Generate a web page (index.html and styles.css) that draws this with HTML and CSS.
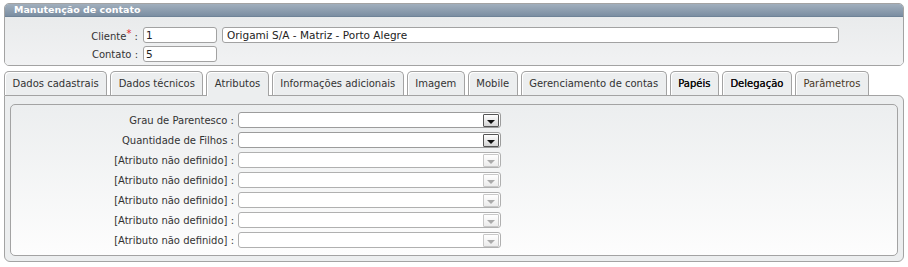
FILE: index.html
```html
<!DOCTYPE html>
<html lang="pt-BR">
<head>
    <meta charset="UTF-8">
    <title>Manutenção de contato</title>
    <link rel="stylesheet" href="styles.css">
</head>
<body>
    <div class="panel">
        <div class="panel_title">Manutenção de contato</div>
        <div class="panel_body">
            <div class="row">
                <label class="lbl">Cliente<span class="req">*</span> :</label>
                <div class="txt short">1</div>
                <div class="txt long">Origami S/A - Matriz - Porto Alegre</div>
            </div>
            <div class="row">
                <label class="lbl">Contato :</label>
                <div class="txt short">5</div>
            </div>
        </div>
    </div>

    <div class="tabs">
        <div class="tab">Dados cadastrais</div>
        <div class="tab">Dados técnicos</div>
        <div class="tab active">Atributos</div>
        <div class="tab">Informações adicionais</div>
        <div class="tab">Imagem</div>
        <div class="tab">Mobile</div>
        <div class="tab">Gerenciamento de contas</div>
        <div class="tab strong">Papéis</div>
        <div class="tab strong">Delegação</div>
        <div class="tab brown">Parâmetros</div>
    </div>
    <div class="tab_panel">
        <div class="inner">
            <div class="arow">
                <label class="alabel">Grau de Parentesco :</label>
                <div class="sel"><span class="btn"><i class="arrow"></i></span></div>
            </div>
            <div class="arow">
                <label class="alabel">Quantidade de Filhos :</label>
                <div class="sel"><span class="btn"><i class="arrow"></i></span></div>
            </div>
            <div class="arow">
                <label class="alabel">[Atributo não definido] :</label>
                <div class="sel off"><span class="btn"><i class="arrow"></i></span></div>
            </div>
            <div class="arow">
                <label class="alabel">[Atributo não definido] :</label>
                <div class="sel off"><span class="btn"><i class="arrow"></i></span></div>
            </div>
            <div class="arow">
                <label class="alabel">[Atributo não definido] :</label>
                <div class="sel off"><span class="btn"><i class="arrow"></i></span></div>
            </div>
            <div class="arow">
                <label class="alabel">[Atributo não definido] :</label>
                <div class="sel off"><span class="btn"><i class="arrow"></i></span></div>
            </div>
            <div class="arow">
                <label class="alabel">[Atributo não definido] :</label>
                <div class="sel off"><span class="btn"><i class="arrow"></i></span></div>
            </div>
        </div>
    </div>
</body>
</html>
```
FILE: styles.css
```css
body {
    margin: 0;
    background-color: #ffffff;
    font-family: "DejaVu Sans", Verdana, sans-serif;
    font-size: 10px;
    color: #333333;
}

.panel {
    margin: 3px 4px 0 4px;
    width: 898px;
    border: 1px solid #a3a3a3;
    border-radius: 5px;
    background-color: #eceeef;
    overflow: hidden;
}

.panel_title {
    height: 12px;
    line-height: 12px;
    padding-left: 9px;
    font-size: 9.5px;
    font-weight: bold;
    color: #ffffff;
    background: linear-gradient(#a1afbd, #7b8ea2);
    border-bottom: 1px solid #6f8397;
}

.panel_body {
    padding: 10px 0 3px 0;
    background: linear-gradient(#e9ebec, #f1f2f3);
}

.row {
    display: flex;
    align-items: center;
    height: 16px;
    margin-bottom: 3px;
}

.row:last-child {
    margin-bottom: 0;
}

.lbl {
    width: 133px;
    text-align: right;
    padding-right: 5px;
}

.req {
    color: #e0262b;
    vertical-align: 3px;
}

.txt {
    height: 14px;
    line-height: 14px;
    border: 1px solid #a2a2a2;
    border-radius: 3px;
    background-color: #ffffff;
    padding-left: 2px;
    font-size: 10.5px;
    color: #222222;
}

.short {
    width: 70px;
}

.long {
    width: 611px;
    margin-left: 5px;
    padding-left: 4px;
}

.tabs {
    display: flex;
    gap: 3px;
    margin: 5px 0 0 4px;
}

.tab {
    height: 23px;
    line-height: 23px;
    padding: 0 7.5px;
    border: 1px solid #a3a3a3;
    border-bottom: none;
    border-radius: 5px 5px 0 0;
    background-color: #eceeef;
    box-shadow: inset 1px 1px 0 #ffffff;
    color: #333333;
    position: relative;
}

.tab.active {
    height: 24px;
    margin-bottom: -1px;
    z-index: 1;
}

.strong {
    color: #111111;
    text-shadow: 0 0 0.2px #000000;
}

.brown {
    color: #4a3826;
}

.tab_panel {
    margin: 0 4px 0 4px;
    border: 1px solid #a3a3a3;
    border-radius: 0 6px 6px 6px;
    background-color: #eceeef;
    padding: 8px 5px 5px 5px;
    width: 888px;
}

.inner {
    border: 1px solid #a3a3a3;
    border-radius: 5px;
    background: linear-gradient(#eceeef, #fdfdfd);
    padding: 7px 0 7px 0;
}

.arow {
    display: flex;
    align-items: center;
    height: 16px;
    margin-bottom: 4px;
}

.arow:last-child {
    margin-bottom: 0;
}

.alabel {
    width: 223px;
    text-align: right;
    padding-right: 4px;
}

.sel {
    width: 261px;
    height: 14px;
    border: 1px solid #9c9c9c;
    border-radius: 3px;
    background-color: #ffffff;
    display: flex;
    justify-content: flex-end;
    align-items: center;
}

.btn {
    width: 14px;
    height: 11px;
    margin-right: 1px;
    border: 1px solid #555555;
    border-radius: 1px;
    background: linear-gradient(#ffffff, #d5d5d5);
    display: flex;
    align-items: center;
    justify-content: center;
}

.arrow {
    width: 0;
    height: 0;
    margin-top: 3px;
    border-left: 4px solid transparent;
    border-right: 4px solid transparent;
    border-top: 4px solid #111111;
}

.off {
    border-color: #b0b0b0;
}

.off .btn {
    border-color: #c8c8c8;
    background: linear-gradient(#ffffff, #ececec);
}

.off .arrow {
    border-top-color: #aaaaaa;
}
```
